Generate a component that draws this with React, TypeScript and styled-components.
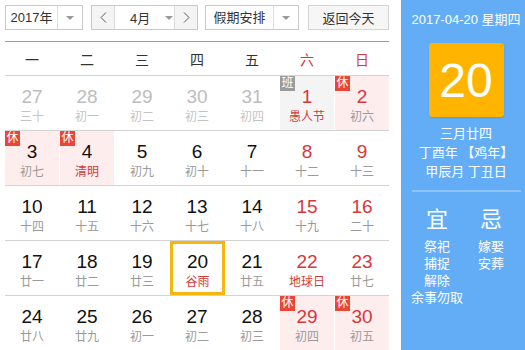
import React from 'react';
import styled, { createGlobalStyle } from 'styled-components';

const GlobalStyle = createGlobalStyle`
  body {
    margin: 0;
    font-family: "Liberation Sans", "Noto Sans CJK SC", sans-serif;
    background: #fff;
  }
`;

const FONT = `"Liberation Sans", "Noto Sans CJK SC", sans-serif`;

type Tag = '休' | '班';

interface Day {
  n: number;
  lunar: string;
  muted?: boolean;
  festival?: boolean;
  tag?: Tag;
  today?: boolean;
}

const weeks: Day[][] = [
  [
    { n: 27, lunar: '三十', muted: true },
    { n: 28, lunar: '初一', muted: true },
    { n: 29, lunar: '初二', muted: true },
    { n: 30, lunar: '初三', muted: true },
    { n: 31, lunar: '初四', muted: true },
    { n: 1, lunar: '愚人节', festival: true, tag: '班' },
    { n: 2, lunar: '初六', tag: '休' },
  ],
  [
    { n: 3, lunar: '初七', tag: '休' },
    { n: 4, lunar: '清明', festival: true, tag: '休' },
    { n: 5, lunar: '初九' },
    { n: 6, lunar: '初十' },
    { n: 7, lunar: '十一' },
    { n: 8, lunar: '十二' },
    { n: 9, lunar: '十三' },
  ],
  [
    { n: 10, lunar: '十四' },
    { n: 11, lunar: '十五' },
    { n: 12, lunar: '十六' },
    { n: 13, lunar: '十七' },
    { n: 14, lunar: '十八' },
    { n: 15, lunar: '十九' },
    { n: 16, lunar: '二十' },
  ],
  [
    { n: 17, lunar: '廿一' },
    { n: 18, lunar: '廿二' },
    { n: 19, lunar: '廿三' },
    { n: 20, lunar: '谷雨', festival: true, today: true },
    { n: 21, lunar: '廿五' },
    { n: 22, lunar: '地球日', festival: true },
    { n: 23, lunar: '廿七' },
  ],
  [
    { n: 24, lunar: '廿八' },
    { n: 25, lunar: '廿九' },
    { n: 26, lunar: '初一' },
    { n: 27, lunar: '初二' },
    { n: 28, lunar: '初三' },
    { n: 29, lunar: '初四', tag: '休' },
    { n: 30, lunar: '初五', tag: '休' },
  ],
];

const weekdays = ['一', '二', '三', '四', '五', '六', '日'];

const Page = styled.div`
  display: flex;
  width: 525px;
  height: 350px;
  overflow: hidden;
  font-family: ${FONT};
`;

const Main = styled.div`
  width: 384px;
  margin-left: 5px;
  margin-right: 12px;
`;

const Toolbar = styled.div`
  display: flex;
  align-items: center;
  height: 25px;
  margin-top: 5px;
  margin-bottom: 11px;
`;

const SelectBox = styled.div<{ w: number; gap?: number }>`
  display: flex;
  width: ${p => p.w}px;
  height: 25px;
  box-sizing: border-box;
  border: 1px solid #c9c9c9;
  background: #fff;
  margin-right: ${p => p.gap ?? 0}px;
  font-size: 13px;
  color: #333;
`;

const SelectLabel = styled.div`
  flex: 1;
  display: flex;
  align-items: center;
  justify-content: center;
  line-height: 23px;
`;

const SelectArrow = styled.div`
  width: 24px;
  border-left: 1px solid #ddd;
  display: flex;
  align-items: center;
  justify-content: center;
`;

const Caret = styled.span`
  width: 0;
  height: 0;
  border-left: 4px solid transparent;
  border-right: 4px solid transparent;
  border-top: 4px solid #999;
`;

const MonthGroup = styled.div`
  display: flex;
  height: 25px;
  box-sizing: border-box;
  border: 1px solid #c9c9c9;
  margin-right: 7px;
  font-size: 13px;
  color: #333;
`;

const NavButton = styled.div<{ side: 'l' | 'r' }>`
  width: 22px;
  background: #f4f4f4;
  display: flex;
  align-items: center;
  justify-content: center;
  ${p => (p.side === 'l' ? 'border-right: 1px solid #ddd;' : 'border-left: 1px solid #ddd;')}
`;

const MonthSelect = styled.div`
  width: 59px;
  display: flex;
  align-items: center;
  padding-left: 15px;
  box-sizing: border-box;
  background: #fff;
  gap: 15px;
`;

const TodayButton = styled.div`
  width: 82px;
  height: 25px;
  box-sizing: border-box;
  border: 1px solid #d5d5d5;
  background: #f6f6f6;
  font-size: 13px;
  color: #333;
  display: flex;
  align-items: center;
  justify-content: center;
  margin-left: 9px;
`;

const BlueRule = styled.div`
  height: 1px;
  background: #6aa7db;
`;

const WeekHeader = styled.div`
  display: grid;
  grid-template-columns: repeat(7, 54px);
  column-gap: 1px;
  height: 33px;
  border-bottom: 1px solid #d3d3d3;
`;

const WeekLabel = styled.div<{ weekend: boolean }>`
  display: flex;
  align-items: center;
  justify-content: center;
  font-size: 14px;
  color: ${p => (p.weekend ? '#d33a3a' : '#333')};
`;

const WeekRow = styled.div`
  display: grid;
  grid-template-columns: repeat(7, 54px);
  column-gap: 1px;
  height: 54px;
  border-bottom: 1px solid #d3d3d3;
`;

const Cell = styled.div<{ bg: string; today: boolean }>`
  position: relative;
  display: flex;
  flex-direction: column;
  align-items: center;
  box-sizing: border-box;
  background: ${p => p.bg};
  padding-top: ${p => (p.today ? 7 : 10)}px;
  border: ${p => (p.today ? '3px solid #f5b70f' : 'none')};
  ${p => (p.today ? 'margin-right: -1px;' : '')}
`;

const DayNum = styled.div<{ color: string }>`
  font-size: 19px;
  line-height: 22px;
  color: ${p => p.color};
`;

const Lunar = styled.div<{ color: string }>`
  font-size: 12px;
  line-height: 16px;
  margin-top: 1px;
  color: ${p => p.color};
`;

const TagBadge = styled.span<{ kind: Tag }>`
  position: absolute;
  left: 0;
  top: 0;
  width: 15px;
  height: 15px;
  line-height: 15px;
  text-align: center;
  font-size: 12px;
  color: #fff;
  background: ${p => (p.kind === '休' ? '#ea4638' : '#9b9b9b')};
`;

const Side = styled.div`
  flex: 1;
  background: #63adf6;
  color: #fff;
  display: flex;
  flex-direction: column;
  align-items: center;
  padding-left: 6px;
`;

const DateLine = styled.div`
  margin-top: 11px;
  font-size: 13px;
  line-height: 18px;
`;

const BigDay = styled.div`
  margin-top: 14px;
  width: 75px;
  height: 74px;
  border-radius: 3px;
  background: #ffb500;
  box-shadow: 0 1px 2px rgba(0, 0, 0, 0.12);
  display: flex;
  align-items: center;
  justify-content: center;
  font-size: 48px;
  font-family: "Liberation Sans", sans-serif;
`;

const LunarInfo = styled.div`
  margin-top: 7px;
  font-size: 13px;
  line-height: 19px;
  text-align: center;
`;

const Divider = styled.div`
  width: 109px;
  height: 2px;
  background: #8dc3f7;
  margin-top: 9px;
`;

const YiJi = styled.div`
  display: grid;
  grid-template-columns: 54px 54px;
  margin-top: 15px;
  margin-left: -50px;
  padding-left: 46px;
`;

const YiJiHead = styled.div`
  text-align: center;
  font-size: 22px;
  line-height: 26px;
  margin-bottom: 5px;
`;

const YiJiList = styled.div`
  text-align: center;
  font-size: 13px;
  line-height: 17px;
  white-space: nowrap;
`;

const Chevron: React.FC<{ dir: 'l' | 'r' }> = ({ dir }) => (
  <svg width="7" height="11" viewBox="0 0 7 11">
    <polyline
      points={dir === 'l' ? '6,0.5 1,5.5 6,10.5' : '1,0.5 6,5.5 1,10.5'}
      fill="none"
      stroke="#555"
      strokeWidth="1"
    />
  </svg>
);

export default function App() {
  return (
    <Page>
      <GlobalStyle />
      <Main>
        <Toolbar>
          <SelectBox w={79} gap={8}>
            <SelectLabel>2017年</SelectLabel>
            <SelectArrow>
              <Caret />
            </SelectArrow>
          </SelectBox>
          <MonthGroup>
            <NavButton side="l">
              <Chevron dir="l" />
            </NavButton>
            <MonthSelect>
              <span>4月</span>
              <Caret />
            </MonthSelect>
            <NavButton side="r">
              <Chevron dir="r" />
            </NavButton>
          </MonthGroup>
          <SelectBox w={95}>
            <SelectLabel>假期安排</SelectLabel>
            <SelectArrow>
              <Caret />
            </SelectArrow>
          </SelectBox>
          <TodayButton>返回今天</TodayButton>
        </Toolbar>
        <BlueRule />
        <WeekHeader>
          {weekdays.map((w, i) => (
            <WeekLabel key={w} weekend={i >= 5}>
              {w}
            </WeekLabel>
          ))}
        </WeekHeader>
        {weeks.map((week, r) => (
          <WeekRow key={r}>
            {week.map((d, c) => {
              const weekend = c >= 5;
              const bg = d.tag === '休' ? '#fdeded' : d.tag === '班' ? '#f4f4f4' : 'transparent';
              const numColor = d.muted ? '#bdbdbd' : weekend ? '#d8373a' : '#111';
              const lunarColor = d.muted ? '#c4c4c4' : d.festival ? '#d33a3a' : '#9a9a9a';
              return (
                <Cell key={c} bg={bg} today={!!d.today}>
                  {d.tag && <TagBadge kind={d.tag}>{d.tag}</TagBadge>}
                  <DayNum color={numColor}>{d.n}</DayNum>
                  <Lunar color={lunarColor}>{d.lunar}</Lunar>
                </Cell>
              );
            })}
          </WeekRow>
        ))}
      </Main>
      <Side>
        <DateLine>2017-04-20 星期四</DateLine>
        <BigDay>20</BigDay>
        <LunarInfo>
          三月廿四
          <br />
          丁酉年 【鸡年】
          <br />
          甲辰月 丁丑日
        </LunarInfo>
        <Divider />
        <YiJi>
          <div>
            <YiJiHead>宜</YiJiHead>
            <YiJiList>
              祭祀
              <br />
              捕捉
              <br />
              解除
              <br />
              余事勿取
            </YiJiList>
          </div>
          <div>
            <YiJiHead>忌</YiJiHead>
            <YiJiList>
              嫁娶
              <br />
              安葬
            </YiJiList>
          </div>
        </YiJi>
      </Side>
    </Page>
  );
}
